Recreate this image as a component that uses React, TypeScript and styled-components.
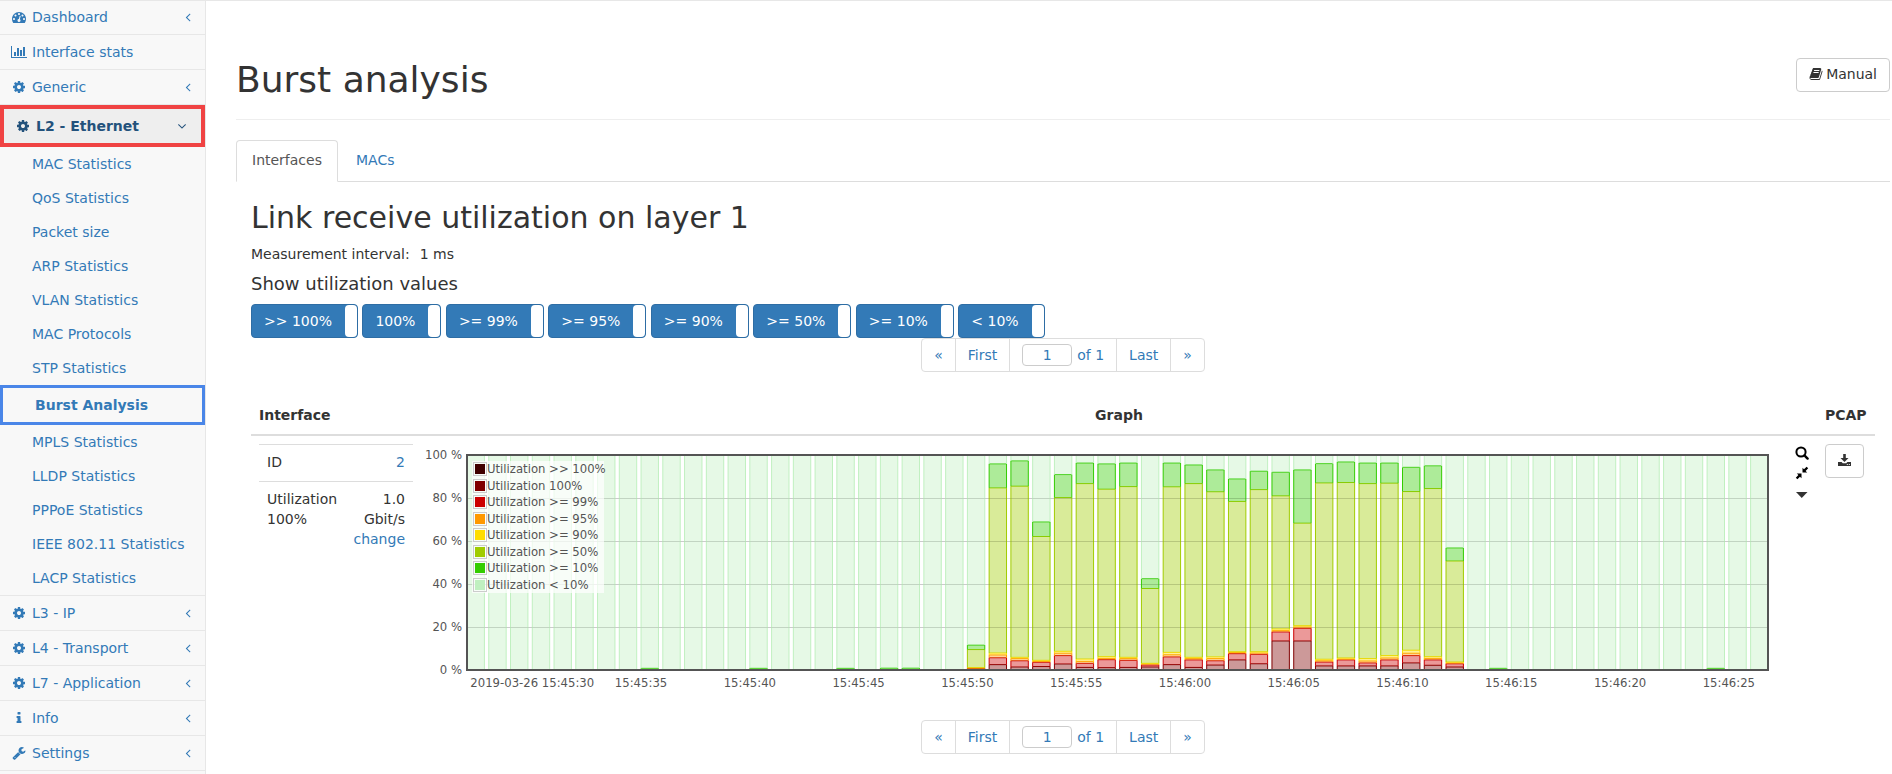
import React, { useLayoutEffect, useRef, useState } from "react";
import styled, { createGlobalStyle, css } from "styled-components";

const link = "#337ab7";
const line = "#ddd";

const GlobalStyle = createGlobalStyle`
  *, *::before, *::after { box-sizing: border-box; }
  body {
    margin: 0;
    background: #fff;
    color: #333;
    font: 14px/20px "DejaVu Sans", Verdana, sans-serif;
  }
  button, input { font: inherit; }
  a { color: ${link}; text-decoration: none; }
  ul { list-style: none; margin: 0; padding: 0; }
  table { border-collapse: collapse; border-spacing: 0; }
`;

/* ---------- icons ---------- */

const paths = {
  dashboard:
    "M384 1152q0-53-37.5-90.5t-90.5-37.5-90.5 37.5-37.5 90.5 37.5 90.5 90.5 37.5 90.5-37.5 37.5-90.5zm192-448q0-53-37.5-90.5t-90.5-37.5-90.5 37.5-37.5 90.5 37.5 90.5 90.5 37.5 90.5-37.5 37.5-90.5zm428 481l101-382q6-26-7.5-48.5t-38.5-29.5-48 6.5-30 39.5l-101 382q-60 5-107 43.5t-63 98.5q-20 77 20 146t117 89 146-20 89-117q16-60-6-117t-72-91zm660-33q0-53-37.5-90.5t-90.5-37.5-90.5 37.5-37.5 90.5 37.5 90.5 90.5 37.5 90.5-37.5 37.5-90.5zm-640-640q0-53-37.5-90.5t-90.5-37.5-90.5 37.5-37.5 90.5 37.5 90.5 90.5 37.5 90.5-37.5 37.5-90.5zm448 192q0-53-37.5-90.5t-90.5-37.5-90.5 37.5-37.5 90.5 37.5 90.5 90.5 37.5 90.5-37.5 37.5-90.5zm320 448q0 261-141 483-19 29-54 29h-1402q-35 0-54-29-141-221-141-483 0-182 71-348t191-286 286-191 348-71 348 71 286 191 191 286 71 348z",
  chart:
    "M640 896v512h-256v-512h256zm384-512v1024h-256v-1024h256zm1024 1152v128h-2048v-1536h128v1408h1920zm-640-896v768h-256v-768h256zm384-384v1152h-256v-1152h256z",
  cog: "M1152 896q0-106-75-181t-181-75-181 75-75 181 75 181 181 75 181-75 75-181zm512-109v222q0 12-8 23t-20 13l-185 28q-19 54-39 91 35 50 107 138 10 12 10 25t-9 23q-27 37-99 108t-94 71q-12 0-26-9l-138-108q-44 23-91 38-16 136-29 186-7 28-36 28h-222q-14 0-24.5-8.5t-11.5-21.5l-28-184q-49-16-90-37l-141 107q-10 9-25 9-14 0-25-11-126-114-165-168-7-10-7-23 0-12 8-23 15-21 51-66.5t54-70.5q-27-50-41-99l-183-27q-13-2-21-12.5t-8-23.5v-222q0-12 8-23t19-13l186-28q14-46 39-92-40-57-107-138-10-12-10-24 0-10 9-23 26-36 98.5-107.5t94.5-71.5q13 0 26 10l138 107q44-23 91-38 16-136 29-186 7-28 36-28h222q14 0 24.5 8.5t11.5 21.5l28 184q49 16 90 37l142-107q9-9 24-9 13 0 25 10 129 119 165 170 7 8 7 22 0 12-8 23-15 21-51 66.5t-54 70.5q26 50 41 98l183 28q13 2 21 12.5t8 23.5z",
  info: "M1216 1344v128q0 26-19 45t-45 19h-512q-26 0-45-19t-19-45v-128q0-26 19-45t45-19h64v-384h-64q-26 0-45-19t-19-45v-128q0-26 19-45t45-19h384q26 0 45 19t19 45v576h64q26 0 45 19t19 45zm-128-1152v192q0 26-19 45t-45 19h-256q-26 0-45-19t-19-45v-192q0-26 19-45t45-19h256q26 0 45 19t19 45z",
  wrench:
    "M448 1472q0-26-19-45t-45-19-45 19-19 45 19 45 45 19 45-19 19-45zm644-420l-682 682q-37 37-90 37-52 0-91-37l-106-108q-38-36-38-90 0-53 38-91l681-681q39 98 114.5 173.5t173.5 114.5zm634-435q0 39-23 106-47 134-164.5 217.5t-258.5 83.5q-185 0-316.500-131.500t-131.500-316.500 131.500-316.500 316.500-131.500q58 0 121.500 16.500t107.500 46.500q16 11 16 28t-16 28l-293 169v224l193 107q5-3 79-48.500t135.500-81 70.500-35.500q15 0 23.500 10t8.500 25z",
  book: "M1703 478q40 57 18 129l-275 906q-19 64-76.500 107.500t-122.500 43.500h-923q-77 0-148.500-53.500t-99.500-131.500q-24-67-2-127 0-4 3-27t4-37q1-8-3-21.500t-3-19.500q2-11 8-21t16.500-23.500 16.500-23.500q23-38 45-91.500t30-91.500q3-10 .5-30t-.5-28q3-11 17-28t17-23q21-36 42-92t25-90q1-9-2.500-32t.5-28q4-13 22-30.500t22-22.500q19-26 42.500-84.500t27.500-96.500q1-8-3-25.500t-2-26.500q2-8 9-18t18-23 17-21q8-12 16.500-30.500t15-35 16-36 19.500-32 26.500-23.500 36-11.500 47.500 5.500l-1 3q38-9 51-9h761q74 0 114 56t18 130l-274 906q-36 119-71.500 153.500t-128.500 34.500h-869q-27 0-38 15-11 16-1 43 24 70 144 70h923q29 0 56-15.500t35-41.500l300-987q7-22 5-57 38 15 59 43zm-1064 2q-4 13 2 22.500t20 9.500h608q13 0 25.500-9.500t16.500-22.500l21-64q4-13-2-22.500t-20-9.500h-608q-13 0-25.500 9.500t-16.500 22.500zm-83 256q-4 13 2 22.500t20 9.500h608q13 0 25.500-9.500t16.500-22.500l21-64q4-13-2-22.500t-20-9.500h-608q-13 0-25.500 9.500t-16.500 22.500z",
  angleLeft:
    "M1203 544q0 13-10 23l-393 393 393 393q10 10 10 23t-10 23l-50 50q-10 10-23 10t-23-10l-466-466q-10-10-10-23t10-23l466-466q10-10 23-10t23 10l50 50q10 10 10 23z",
  angleDown:
    "M1395 736q0 13-10 23l-466 466q-10 10-23 10t-23-10l-466-466q-10-10-10-23t10-23l50-50q10-10 23-10t23 10l393 393 393-393q10-10 23-10t23 10l50 50q10 10 10 23z",
};

type IconName = keyof typeof paths;

function Icon({ name }: { name: IconName }) {
  const wide = name === "chart";
  return (
    <svg width={wide ? 16 : 14} height="14" viewBox={wide ? "0 0 2048 1792" : "0 0 1792 1792"} fill="currentColor" aria-hidden="true">
      <path d={paths[name]} />
    </svg>
  );
}

/* ---------- page frame ---------- */

const Page = styled.div`
  display: grid;
  grid-template-columns: 206px minmax(0, 1fr);
  min-height: 100vh;
`;

const Sidebar = styled.nav`
  background: #f8f8f8;
  border-right: 1px solid #e7e7e7;
  box-shadow: inset 0 1px #e7e7e7;
`;

const NavItem = styled.li`
  border-bottom: 1px solid #e7e7e7;
`;

const NavLink = styled.a<{ $open?: boolean }>`
  display: flex;
  align-items: center;
  height: 34px;
  padding: 0 10px;
  gap: 4px;
  ${(p) =>
    p.$open &&
    css`
      height: 42px;
      padding-right: 12px;
      border: 4px solid #f04343;
      background: #eee;
      color: #23527c;
      font-weight: bold;
    `}
`;

const NavIcon = styled.span`
  display: flex;
  justify-content: center;
  width: 18px;
`;

const NavText = styled.span`
  flex: 1;
`;

const SubLink = styled.a<{ $current?: boolean }>`
  display: flex;
  align-items: center;
  height: 34px;
  padding-left: 32px;
  white-space: nowrap;
  ${(p) =>
    p.$current &&
    css`
      height: 40px;
      border: 3px solid #4a86e8;
      font-weight: bold;
    `}
`;

const Main = styled.main`
  border-top: 1px solid #e7e7e7;
  padding: 57px 2px 0 30px;
`;

const Header = styled.header`
  display: flex;
  justify-content: space-between;
  align-items: flex-start;
  padding-bottom: 19px;
  border-bottom: 1px solid #eee;
`;

const Title = styled.h1`
  margin: 2px 0 0;
  font-size: 36px;
  line-height: 40px;
  font-weight: normal;
`;

const Button = styled.button`
  display: flex;
  align-items: center;
  justify-content: center;
  gap: 3px;
  height: 34px;
  padding: 0 12px 2px;
  border: 1px solid #ccc;
  border-radius: 4px;
  background: #fff;
  color: #333;
`;

const Tabs = styled.ul`
  display: flex;
  gap: 2px;
  margin-top: 20px;
  border-bottom: 1px solid ${line};
`;

const Tab = styled.a<{ $active?: boolean }>`
  display: block;
  margin-bottom: -1px;
  padding: 9px 15px 11px;
  border: 1px solid transparent;
  border-radius: 4px 4px 0 0;
  ${(p) =>
    p.$active &&
    css`
      border-color: ${line} ${line} #fff;
      background: #fff;
      color: #555;
    `}
`;

const Panel = styled.section`
  padding: 19px 15px 0;
`;

const Heading = styled.h2`
  margin: 0 0 10px;
  font-size: 30px;
  line-height: 33px;
  font-weight: normal;
`;

const Interval = styled.dl`
  display: flex;
  gap: 10px;
  margin: 0 0 10px;
  dd { margin: 0; }
`;

const Subheading = styled.h4`
  margin: 0 0 10px;
  font-size: 18px;
  line-height: 20px;
  font-weight: normal;
`;

const Toggle = styled.button`
  display: inline-flex;
  align-items: stretch;
  vertical-align: top;
  height: 34px;
  padding: 0;
  border: 1px solid #2e6da4;
  border-radius: 4px;
  background: ${link};
  color: #fff;
  line-height: 32px;
`;

const ToggleText = styled.span`
  padding: 0 13px 0 12px;
`;

const ToggleHandle = styled.span`
  width: 12px;
  border-radius: 4px;
  background: #fff;
`;

/* ---------- pagination ---------- */

const Pager = styled.ul`
  display: flex;
  width: fit-content;
  margin: 0 auto;
  border: 1px solid ${line};
  border-radius: 4px;
  li + li { border-left: 1px solid ${line}; }
`;

const PagerCell = styled.a`
  display: flex;
  align-items: center;
  height: 32px;
  padding: 0 12px;
`;

const PagerLabel = styled.label`
  display: flex;
  align-items: center;
  gap: 5px;
  height: 32px;
  padding: 0 12px;
  color: ${link};
`;

const PageInput = styled.input`
  width: 50px;
  height: 22px;
  padding: 0;
  border: 1px solid #ccc;
  border-radius: 4px;
  background: #fff;
  color: ${link};
  text-align: center;
`;

function Pagination() {
  return (
    <Pager>
      <li><PagerCell href="#prev" aria-label="Previous page">«</PagerCell></li>
      <li><PagerCell href="#first">First</PagerCell></li>
      <li>
        <PagerLabel>
          <PageInput type="text" defaultValue="1" aria-label="Page" />
          of 1
        </PagerLabel>
      </li>
      <li><PagerCell href="#last">Last</PagerCell></li>
      <li><PagerCell href="#next" aria-label="Next page">»</PagerCell></li>
    </Pager>
  );
}

/* ---------- table ---------- */

const DataTable = styled.table`
  width: 100%;
  margin: 26px 0 19px;
  table-layout: fixed;
`;

const HeadCell = styled.th<{ $center?: boolean }>`
  padding: 7px 8px 9px;
  border-bottom: 2px solid ${line};
  text-align: ${(p) => (p.$center ? "center" : "left")};
`;

const Cell = styled.td<{ $flush?: boolean }>`
  padding: 8px;
  padding-left: ${(p) => (p.$flush ? 0 : 8)}px;
  vertical-align: top;
`;

const Details = styled.table`
  width: 100%;
  td, th {
    padding: 7px 8px 9px;
    border-top: 1px solid ${line};
    vertical-align: top;
    text-align: left;
    font-weight: normal;
  }
  td { text-align: right; }
`;

const GraphArea = styled.div`
  display: flex;
`;

const Plot = styled.div`
  position: relative;
  flex: 1;
  min-width: 0;
  height: 249px;
  color: #545454;
  font-size: smaller;
  svg { display: block; }
  text { fill: currentColor; }
`;

const Legend = styled.ul`
  position: absolute;
  left: 51px;
  top: 17px;
  width: 132px;
  height: 132px;
  display: grid;
  grid-template-rows: repeat(8, 1fr);
  background: rgba(255, 255, 255, 0.7);
`;

const LegendItem = styled.li`
  display: flex;
  align-items: center;
  padding-left: 1px;
  line-height: 14px;
  white-space: nowrap;
`;

const Swatch = styled.span<{ $color: string }>`
  width: 14px;
  height: 14px;
  padding: 1px;
  border: 1px solid #ccc;
  background: ${(p) => p.$color} content-box;
`;

const Tools = styled.div`
  display: flex;
  flex-direction: column;
  align-items: center;
  gap: 6px;
  width: 14px;
  padding-top: 2px;
`;

const ToolButton = styled.button`
  display: flex;
  justify-content: center;
  align-items: center;
  width: 14px;
  height: 14px;
  padding: 0;
  border: 0;
  background: none;
  color: #000;
`;

/* ---------- chart ---------- */

const colors = ["#800000", "#cc0000", "#ff9900", "#ffdd00", "#a0cc00", "#33cc00", "#c0f0c0"];

// Cumulative percentages per second: 100%, >=99%, >=95%, >=90%, >=50%, >=10%
const samples: Record<number, number[]> = {
  35: [0, 0, 0, 0, 0, 0.8],
  40: [0, 0, 0, 0, 0, 0.8],
  44: [0, 0, 0, 0, 0, 0.8],
  46: [0, 0, 0, 0, 0, 0.9],
  47: [0, 0, 0, 0, 0, 0.9],
  50: [0.6, 0.8, 0.9, 1.1, 9.5, 11.6],
  51: [2.5, 5.7, 7, 7.9, 84.7, 95.9],
  52: [1.4, 4.3, 5.3, 5.9, 85.5, 97.3],
  53: [1.6, 3.6, 4, 4.5, 62.1, 68.9],
  54: [2.8, 6.7, 7.8, 8.7, 80.2, 90.9],
  55: [1.2, 3.1, 4, 5.1, 86.7, 96.3],
  56: [1.1, 4.8, 5.4, 6.2, 84.1, 95.9],
  57: [1.2, 4.5, 5.3, 5.9, 85.3, 96.3],
  58: [1.4, 2.3, 2.8, 3.1, 37.9, 42.5],
  59: [2.5, 6.1, 7.1, 8.2, 85.2, 96.3],
  60: [1.2, 4.7, 5.3, 5.9, 86.7, 95.4],
  61: [2.3, 4.3, 5.3, 6.1, 82.9, 93.1],
  62: [4.7, 7.6, 8.1, 8.5, 78.4, 88.9],
  63: [2.9, 7.3, 7.9, 8.5, 83.9, 92.5],
  64: [13.5, 17.7, 18.3, 19.1, 81, 92],
  65: [13.5, 19.4, 20, 20.6, 68.3, 93.1],
  66: [1.9, 3.7, 4.3, 5, 87, 96],
  67: [1.9, 4.7, 5.1, 5.6, 87.2, 96.8],
  68: [1.9, 3.3, 4.2, 5.3, 86.7, 96.3],
  69: [1.9, 4.7, 5.6, 6.7, 86.9, 96.3],
  70: [3.3, 6.7, 7.8, 9.2, 83, 94.3],
  71: [2.2, 4.7, 5.4, 6.2, 84.4, 95],
  72: [1.4, 2.9, 3.3, 3.7, 50.7, 56.8],
  74: [0, 0, 0, 0, 0, 0.8],
  84: [0, 0, 0, 0, 0, 0.8],
};

const legend = [
  ["#400000", "Utilization >> 100%"],
  ["#800000", "Utilization 100%"],
  ["#cc0000", "Utilization >= 99%"],
  ["#ff9900", "Utilization >= 95%"],
  ["#ffdd00", "Utilization >= 90%"],
  ["#a0cc00", "Utilization >= 50%"],
  ["#33cc00", "Utilization >= 10%"],
  ["#c0f0c0", "Utilization < 10%"],
];

const FIRST = 27;
const COUNT = 60;
const BAR = 0.8;
const LEFT = 46;
const RIGHT = 27;
const TOP = 11;
const HEIGHT = 215;

const pad = (n: number) => String(n).padStart(2, "0");

function UtilizationChart() {
  const box = useRef<HTMLDivElement>(null);
  const [width, setWidth] = useState(1374);

  useLayoutEffect(() => {
    const el = box.current!;
    const update = () => setWidth(el.clientWidth);
    update();
    const observer = new ResizeObserver(update);
    observer.observe(el);
    return () => observer.disconnect();
  }, []);

  const inner = width - LEFT - RIGHT;
  const step = inner / (COUNT - 1 + BAR);
  const x = (t: number) => LEFT + (t - FIRST) * step;
  const y = (v: number) => TOP + HEIGHT - (v / 100) * HEIGHT;

  const bars: React.ReactNode[] = [];
  for (let t = FIRST; t < FIRST + COUNT; t++) {
    const tops = [...(samples[t] ?? [0, 0, 0, 0, 0, 0]), 100];
    const x0 = x(t);
    const x1 = x0 + step * BAR;
    let below = 0;
    tops.forEach((top, i) => {
      if (top > below) {
        bars.push(
          <g key={`${t}-${i}`}>
            <rect x={x0} y={y(top)} width={x1 - x0} height={y(below) - y(top)} fill={colors[i]} fillOpacity={0.4} />
            <path d={`M${x0} ${y(below)}V${y(top)}H${x1}V${y(below)}`} fill="none" stroke={colors[i]} />
          </g>
        );
      }
      below = Math.max(below, top);
    });
  }

  return (
    <Plot ref={box}>
      <svg width={width} height={249} role="img" aria-label="Link utilization over time">
        {[20, 40, 60, 80].map((v) => (
          <rect key={v} x={LEFT} y={Math.round(y(v))} width={inner} height={1} fill="#545454" fillOpacity={0.22} />
        ))}
        {bars}
        {[20, 40, 60, 80].map((v) => (
          <rect key={v} x={LEFT} y={Math.round(y(v))} width={inner} height={1} fill="#545454" fillOpacity={0.1} />
        ))}
        <rect x={LEFT} y={TOP} width={inner} height={HEIGHT} fill="none" stroke="#545454" strokeWidth={2} />
        {[0, 20, 40, 60, 80, 100].map((v) => (
          <text key={v} x={LEFT - 5} y={y(v) + 4} textAnchor="end">{v} %</text>
        ))}
        {Array.from({ length: 12 }, (_, i) => 30 + i * 5).map((t, i) => (
          <text key={t} x={x(t)} y={243} textAnchor="middle">
            {`${i === 0 ? "2019-03-26 " : ""}15:${pad(45 + Math.floor(t / 60))}:${pad(t % 60)}`}
          </text>
        ))}
      </svg>
      <Legend>
        {legend.map(([color, text]) => (
          <LegendItem key={text}><Swatch $color={color} />{text}</LegendItem>
        ))}
      </Legend>
    </Plot>
  );
}

/* ---------- content ---------- */

type Entry = { icon: IconName; text: string; plain?: boolean; children?: string[] };

const entries: Entry[] = [
  { icon: "dashboard", text: "Dashboard" },
  { icon: "chart", text: "Interface stats", plain: true },
  { icon: "cog", text: "Generic" },
  {
    icon: "cog",
    text: "L2 - Ethernet",
    children: [
      "MAC Statistics", "QoS Statistics", "Packet size", "ARP Statistics", "VLAN Statistics",
      "MAC Protocols", "STP Statistics", "Burst Analysis", "MPLS Statistics", "LLDP Statistics",
      "PPPoE Statistics", "IEEE 802.11 Statistics", "LACP Statistics",
    ],
  },
  { icon: "cog", text: "L3 - IP" },
  { icon: "cog", text: "L4 - Transport" },
  { icon: "cog", text: "L7 - Application" },
  { icon: "info", text: "Info" },
  { icon: "wrench", text: "Settings" },
];

const thresholds = [">> 100%", "100%", ">= 99%", ">= 95%", ">= 90%", ">= 50%", ">= 10%", "< 10%"];

export default function App() {
  return (
    <>
      <GlobalStyle />
      <Page>
        <Sidebar>
          <ul>
            {entries.map((e) => (
              <NavItem key={e.text}>
                <NavLink href="#menu" $open={!!e.children}>
                  <NavIcon><Icon name={e.icon} /></NavIcon>
                  <NavText>{e.text}</NavText>
                  {!e.plain && <Icon name={e.children ? "angleDown" : "angleLeft"} />}
                </NavLink>
                {e.children && (
                  <ul>
                    {e.children.map((c) => (
                      <li key={c}><SubLink href="#page" $current={c === "Burst Analysis"}>{c}</SubLink></li>
                    ))}
                  </ul>
                )}
              </NavItem>
            ))}
          </ul>
        </Sidebar>
        <Main>
          <Header>
            <Title>Burst analysis</Title>
            <Button type="button"><Icon name="book" />Manual</Button>
          </Header>
          <Tabs>
            <li><Tab href="#interfaces" $active>Interfaces</Tab></li>
            <li><Tab href="#macs">MACs</Tab></li>
          </Tabs>
          <Panel>
            <Heading>Link receive utilization on layer 1</Heading>
            <Interval><dt>Measurement interval:</dt><dd>1 ms</dd></Interval>
            <Subheading>Show utilization values</Subheading>
            <div>
              {thresholds.map((t) => (
                <React.Fragment key={t}>
                  <Toggle type="button" aria-pressed="true">
                    <ToggleText>{t}</ToggleText>
                    <ToggleHandle />
                  </Toggle>{" "}
                </React.Fragment>
              ))}
            </div>
            <Pagination />
            <DataTable>
              <colgroup>
                <col width="170" />
                <col />
                <col width="58" />
              </colgroup>
              <thead>
                <tr>
                  <HeadCell>Interface</HeadCell>
                  <HeadCell $center>Graph</HeadCell>
                  <HeadCell>PCAP</HeadCell>
                </tr>
              </thead>
              <tbody>
                <tr>
                  <Cell>
                    <Details>
                      <tbody>
                        <tr><th scope="row">ID</th><td><a href="#interface">2</a></td></tr>
                        <tr><th scope="row">Utilization 100%</th><td>1.0 Gbit/s <a href="#change">change</a></td></tr>
                      </tbody>
                    </Details>
                  </Cell>
                  <Cell $flush>
                    <GraphArea>
                      <UtilizationChart />
                      <Tools>
                        <ToolButton type="button" aria-label="Zoom">
                          <svg width="14" height="14" viewBox="0 0 14 14" fill="none" stroke="currentColor">
                            <circle cx="6" cy="6" r="4.600" strokeWidth="2" />
                            <path d="M9.400 9.400L12.600 12.600" strokeWidth="2.400" strokeLinecap="round" />
                          </svg>
                        </ToolButton>
                        <ToolButton type="button" aria-label="Shrink">
                          <svg width="14" height="14" viewBox="0 0 14 14" fill="currentColor">
                            <path d="M7.500 6.600V1.700L9 3.200L11.600.7L13.200 2.200L10.600 4.900L12.200 6.600zM6.500 7.400V12.300L5 10.800L2.400 13.300L.8 11.800L3.400 9.100L1.800 7.400z" />
                          </svg>
                        </ToolButton>
                        <ToolButton type="button" aria-label="More">
                          <svg width="14" height="14" viewBox="0 0 14 14" fill="#333"><path d="M1 6H12.500L6.750 12z" /></svg>
                        </ToolButton>
                      </Tools>
                    </GraphArea>
                  </Cell>
                  <Cell>
                    <Button type="button" aria-label="Download PCAP">
                      <svg width="13" height="14" viewBox="0 0 13 14" fill="currentColor">
                        <path d="M5.200 1h2.600v4h2.700L6.500 9L2.500 5h2.700zM0 9h3.600l1.200 1.200h3.400L9.400 9H13v4H0zM8.800 11v.9h1V11zM10.800 11v.9h1V11z" fillRule="evenodd" />
                      </svg>
                    </Button>
                  </Cell>
                </tr>
              </tbody>
            </DataTable>
            <Pagination />
          </Panel>
        </Main>
      </Page>
    </>
  );
}
